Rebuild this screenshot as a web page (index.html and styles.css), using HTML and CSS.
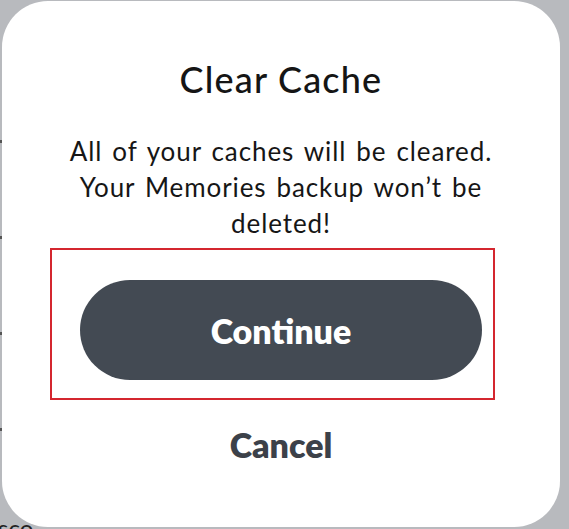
FILE: index.html
```html
<!DOCTYPE html>
<html>
<head>
<meta charset="utf-8">
<link rel="stylesheet" href="styles.css">
</head>
<body>
<div class="page">
  <div class="behind">
    <span class="tick t1"></span>
    <span class="tick t2"></span>
    <span class="tick t3"></span>
    <span class="tick t4"></span>
    <span class="behind-text">sco</span>
  </div>
  <div class="dialog">
    <h1 class="title">Clear Cache</h1>
    <p class="message">All of your caches will be cleared.<br>Your Memories backup won’t be<br>deleted!</p>
    <div class="highlight">
      <button class="primary">Continue</button>
    </div>
    <button class="secondary">Cancel</button>
  </div>
</div>
</body>
</html>
```
FILE: styles.css
```css
html, body {
  margin: 0;
  padding: 0;
}
body {
  background: #b8babe;
  font-family: Lato, "Noto Sans", sans-serif;
  width: 569px;
  height: 529px;
  overflow: hidden;
}
.page {
  position: relative;
  width: 569px;
  height: 529px;
}
.behind {
  position: absolute;
  inset: 0;
}
.tick {
  position: absolute;
  left: 0;
  width: 2px;
  height: 3px;
  background: #555;
}
.t1 { top: 140px; }
.t2 { top: 236px; }
.t3 { top: 332px; }
.t4 { top: 428px; }
.behind-text {
  position: absolute;
  left: -2px;
  top: 514px;
  font-size: 24px;
  line-height: 28px;
  color: #222;
}
.dialog {
  position: absolute;
  left: 2px;
  top: 1px;
  width: 558px;
  height: 526px;
  background: #fff;
  border-radius: 46px;
  display: flex;
  flex-direction: column;
  align-items: center;
}
.title {
  margin: 56px 0 0;
  font-size: 36px;
  line-height: 44px;
  font-weight: 500;
  color: #151515;
  letter-spacing: 1.2px;
}
.message {
  margin: 32px 0 0;
  font-size: 26px;
  line-height: 36px;
  text-align: center;
  color: #161616;
  letter-spacing: 0.9px;
  word-spacing: 2.5px;
}
.highlight {
  align-self: flex-start;
  margin: 7px 0 0 48px;
  width: 445px;
  height: 152px;
  box-sizing: border-box;
  border: 2px solid #d4262f;
  padding: 30px 11px 0 28px;
}
.primary {
  display: block;
  width: 402px;
  height: 100px;
  border: none;
  border-radius: 50px;
  background: #434a53;
  color: #fff;
  font-family: Lato, "Noto Sans", sans-serif;
  font-size: 34px;
  font-weight: 800;
  padding: 0;
}
.secondary {
  margin-top: 25px;
  border: none;
  background: none;
  padding: 0;
  font-family: Lato, "Noto Sans", sans-serif;
  font-size: 34px;
  font-weight: 800;
  line-height: 40px;
  color: #3c4149;
}
```
